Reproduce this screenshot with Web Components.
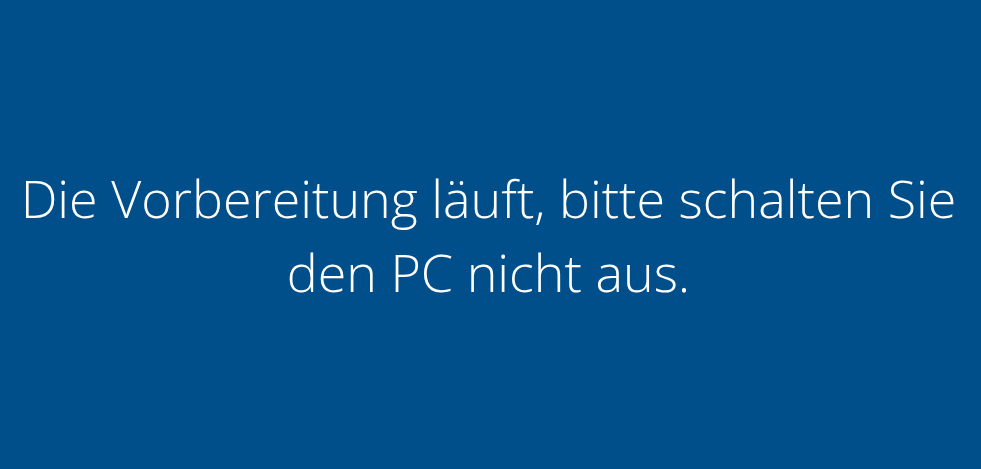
<!DOCTYPE html>
<html lang="de">
<head>
<meta charset="utf-8">
<title>Vorbereitung</title>
<style>
html, body { margin: 0; min-height: 100vh; background: #004e8a; }
</style>
</head>
<body>
<setup-screen><status-message>Die Vorbereitung läuft, bitte schalten Sie den PC nicht aus.</status-message></setup-screen>
<script>
class SetupScreen extends HTMLElement {
  constructor() {
    super();
    this.attachShadow({ mode: "open" }).innerHTML = `
      <style>
        :host { display: block; background: #004e8a; color: #fff; }
        main { display: grid; align-items: center; min-height: 100vh; box-sizing: border-box; padding: 0 20px 0 16px; }
      </style>
      <main><slot></slot></main>`;
  }
}
class StatusMessage extends HTMLElement {
  constructor() {
    super();
    this.attachShadow({ mode: "open" }).innerHTML = `
      <style>
        :host { display: block; text-align: center; }
        p { margin: 0; font: 300 52px/74px "Open Sans", "Noto Sans", sans-serif; }
      </style>
      <p role="status"><slot></slot></p>`;
  }
}
customElements.define("setup-screen", SetupScreen);
customElements.define("status-message", StatusMessage);
</script>
</body>
</html>
